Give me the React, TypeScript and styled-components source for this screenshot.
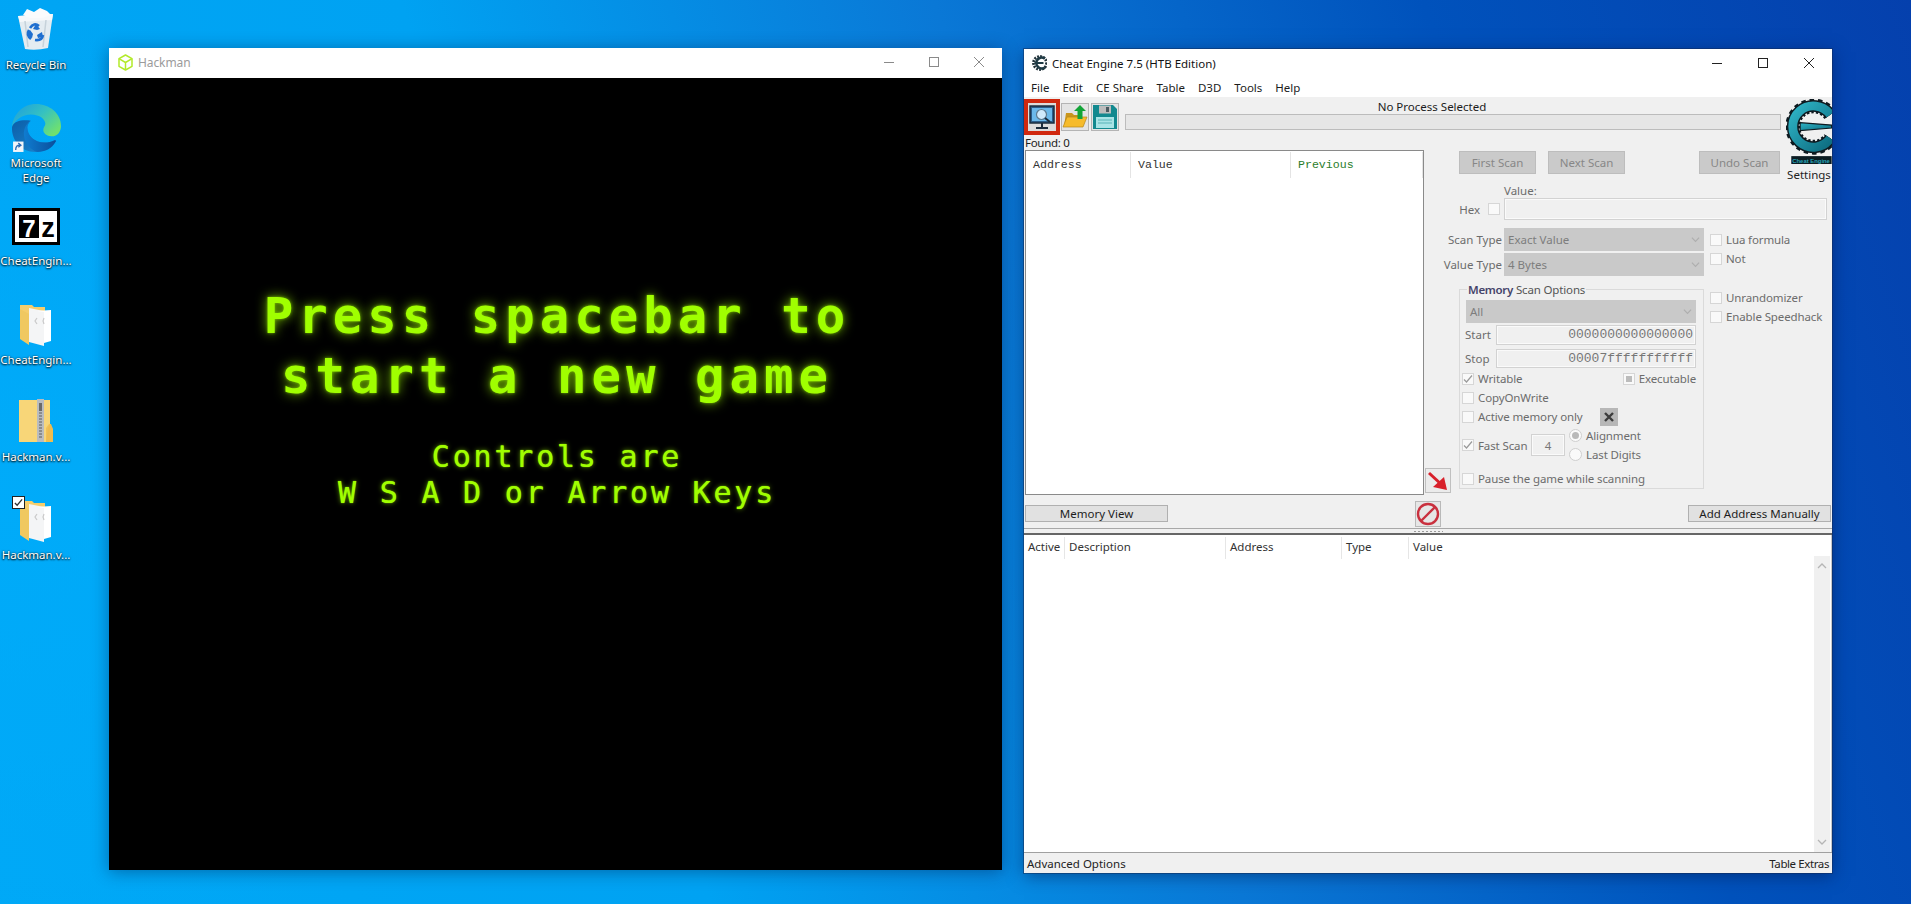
import React from "react";
import styled, { createGlobalStyle } from "styled-components";

const UI = `"Noto Sans", "Open Sans", sans-serif`;
const MONO = `"Liberation Mono", monospace`;

const Global = createGlobalStyle`
  html, body { margin: 0; padding: 0; width: 100%; height: 100%; overflow: hidden; }
  #root { width: 100%; height: 100%; }
  * { box-sizing: border-box; }
`;

const Desktop = styled.div`
  position: relative; width: 1911px; height: 904px; overflow: hidden; font-family: ${UI};
  background:
    radial-gradient(ellipse 500px 500px at 0px 500px, rgba(0,172,250,.8), rgba(0,172,250,0)),
    linear-gradient(71deg, #00a8f6 0%, #00a2f2 32%, #0a78d6 56%, #0052bc 78%, #0540ad 100%);
`;

/* ---------- desktop icons ---------- */
const IconColumn = styled.div`position: absolute; left: 0; top: 0; width: 72px; display: flex; flex-direction: column;`;
const IconCell = styled.div<{ $h: number }>`height: ${p => p.$h}px; display: flex; flex-direction: column; align-items: center;`;
const IconSlot = styled.div<{ $pb: number }>`position: relative; height: 57px; width: 72px; display: flex; align-items: flex-end; justify-content: center; padding-bottom: ${p => p.$pb}px;`;
const IconLabel = styled.div`
  font-size: 11.5px; line-height: 15px; color: #fff; text-align: center; white-space: nowrap;
  text-shadow: 0 1px 2px #000, 0 0 2px rgba(0,0,0,.7);
`;
const Tick = styled.span`
  position: absolute; left: 12px; top: 6px; width: 13px; height: 13px; background: #fff; border: 1px solid #222;
  display: flex; align-items: center; justify-content: center;
`;

const RecycleIcon = () => (
  <svg width="40" height="44" viewBox="0 0 40 44">
    <path d="M2 9 L37 7 L32 41 Q20 44 9 42 Z" fill="#e4ecf1" />
    <path d="M2 9 L37 7 L36 13 L4 15 Z" fill="#f6f8fa" />
    <path d="M7 8 L11 2 L18 5 L24 1 L31 4 L35 8 L26 11 L14 11 Z" fill="#fafbfc" />
    <path d="M9 14 L12 40 M30 13 L27 40" stroke="#c6d2da" strokeWidth="1.5" fill="none" />
    <path d="M20 17 l4 5 -3 1 -4 -1 z M26 25 l1 5 -5 1 -1 -3 z M13 30 l-2 -4 3 -3 3 4 -1 4 z" fill="#1f6fd0" />
    <path d="M14 21 q4 -6 9 -2 M27 28 q-1 6 -8 5 M15 32 q-5 -4 -2 -9" stroke="#1f6fd0" strokeWidth="2.6" fill="none" />
  </svg>
);

const EdgeIcon = () => (
  <svg width="50" height="50" viewBox="0 0 48 48">
    <defs>
      <linearGradient id="eg1" x1="0" y1="0" x2="1" y2="0.7"><stop offset="0" stopColor="#1b9de2" /><stop offset=".55" stopColor="#35c1c1" /><stop offset="1" stopColor="#6fe070" /></linearGradient>
      <linearGradient id="eg2" x1="0" y1="0" x2="1" y2="1"><stop offset="0" stopColor="#0c5ea8" /><stop offset="1" stopColor="#1a8ad4" /></linearGradient>
      <linearGradient id="eg3" x1="0" y1="0" x2="1" y2="0"><stop offset="0" stopColor="#0f7cd0" /><stop offset="1" stopColor="#0a4f9c" /></linearGradient>
    </defs>
    <path d="M24 1C11 1 2 11 1 23c3-7 10-12 18-12 9 0 14 5 14 9 0 2-2 3-2 6 0 3 3 6 8 6 6 0 9-5 9-10C48 10 37 1 24 1z" fill="url(#eg1)" />
    <path d="M1 23c-.8 13 9 24 22 24 9 0 15-3 20-10 .5-1-.3-1.6-1.2-1.2-3 1.5-6 2.2-9.5 2.2-9.500 0-17-6.500-17-14.500 0-3 1.700-5 3.700-6.500C11 16 3 17 1 23z" fill="url(#eg2)" />
    <path d="M19 17c-5 3-8 9-6 17 2 7 7 11 12 13 8 0 14-3 18-10 .5-1-.3-1.600-1.200-1.200-3 1.500-6 2.200-9.500 2.200-9.500 0-16.500-6.500-16.500-14.500 0-2.500 1.200-4.500 3.200-6.500z" fill="url(#eg3)" />
    <rect x="2" y="37" width="10" height="10" fill="#f2f5f8" />
    <path d="M4.500 45c0-3 1.500-4.500 4-4.500M7 38.500l2.500 2-2.500 2" stroke="#2b6cb8" strokeWidth="1.300" fill="none" />
  </svg>
);

const SevenZip = () => (
  <svg width="48" height="37" viewBox="0 0 48 37" style={{ display: "block" }}>
    <rect width="48" height="37" fill="#000" />
    <rect x="3" y="3" width="42" height="31" fill="#fff" />
    <rect x="7" y="7" width="20" height="23" fill="#000" />
    <text x="17" y="29" textAnchor="middle" fontFamily="Liberation Sans, sans-serif" fontWeight="700" fontSize="24" fill="#fff">7</text>
    <text x="36" y="29" textAnchor="middle" fontFamily="Liberation Sans, sans-serif" fontWeight="700" fontSize="27" fill="#000">z</text>
  </svg>
);

const PaperFolder = () => (
  <svg width="32" height="42" viewBox="0 0 32 42">
    <path d="M0 1h12l2 2h11v34H8L0 30z" fill="#f5cd6b" />
    <path d="M0 5 L9 10 V41 L0 35 Z" fill="#f0c860" />
    <path d="M9 4 L24 7 V42 L9 38 Z" fill="#f4f5f6" />
    <path d="M17 7 L31 6 V37 L24 39 V8 Z" fill="#fff" />
    <path d="M17 14 l-2 3 2 3 M24 14 l-1 3 1 3" stroke="#c9c9c9" strokeWidth="1.200" fill="none" />
  </svg>
);

const ZipFolder = () => (
  <svg width="35" height="44" viewBox="0 0 35 44">
    <rect x="0" y="1" width="31" height="42" fill="#f8d678" />
    <path d="M27 29 l3 -4 h1 v18 h-4 z" fill="#f2c257" />
    <path d="M31 25 h1 l2 5 v13 h-7 l2 -14 z" fill="#efbc50" />
    <rect x="18" y="0" width="7" height="43" fill="#b9bcbf" />
    <rect x="20" y="4" width="3" height="8" fill="#6a6a6a" />
    <path d="M20 14h3M20 17h3M20 20h3M20 23h3M20 26h3M20 29h3M20 32h3M20 35h3M20 38h3" stroke="#5c5c5c" strokeWidth="1" />
  </svg>
);

/* ---------- window controls ---------- */
const Ctl = ({ kind, color }: { kind: "min" | "max" | "close"; color: string }) => (
  <svg width="12" height="12" viewBox="0 0 12 12" fill="none" stroke={color} strokeWidth="1">
    {kind === "min" && <path d="M1 6.500h10" />}
    {kind === "max" && <rect x="1.500" y="1.500" width="9" height="9" />}
    {kind === "close" && <path d="M1 1l10 10M11 1L1 11" />}
  </svg>
);

const Controls = styled.div<{ $gap: number; $right: number; $lift?: number }>`
  margin-left: auto; display: flex; align-items: center; gap: ${p => p.$gap}px; padding-right: ${p => p.$right}px; margin-bottom: ${p => p.$lift || 0}px;
`;

/* ---------- hackman window ---------- */
const HackWindow = styled.section`
  position: absolute; left: 109px; top: 48px; width: 893px; height: 822px; display: flex; flex-direction: column;
  box-shadow: 0 2px 16px rgba(0,30,80,.45);
`;
const HackTitle = styled.header`
  height: 30px; background: #fff; display: flex; align-items: center; padding: 0 0 1px 9px; gap: 5px;
  font-size: 12px; color: #9b9b9b; letter-spacing: -.1px;
`;
const Screen = styled.main`
  flex: 1; background: #000; color: #a0ff00; font-family: "DejaVu Sans Mono", monospace;
  display: flex; flex-direction: column; align-items: center; padding: 209px 0 0 3px; text-align: center;
`;
const Headline = styled.h1`
  margin: 0; font-size: 49px; line-height: 60px; font-weight: 700; letter-spacing: 5px;
  text-shadow: 0 0 12px rgba(160,255,0,.75), 0 0 3px rgba(160,255,0,.6);
`;
const Subline = styled.p`
  margin: 32px 0 0; font-size: 30px; line-height: 36px; font-weight: 400; letter-spacing: 2.800px; white-space: pre;
  text-shadow: 0 0 5px rgba(160,255,0,.6), 0 0 1px #a0ff00;
`;

/* ---------- cheat engine window ---------- */
const CeWindow = styled.section`
  position: absolute; left: 1024px; top: 49px; width: 808px; height: 824px; display: flex; flex-direction: column;
  background: #f0f0f0; overflow: hidden; color: #1c1c1c; font-size: 11.500px;
  box-shadow: 0 0 0 1px rgba(20,40,80,.45), 0 3px 16px rgba(0,20,70,.5);
`;
const CeTitle = styled.header`
  height: 28px; flex: none; background: #fff; display: flex; align-items: center; padding-left: 7px; gap: 5px; font-size: 11.500px; color: #111;
`;
const MenuBar = styled.nav`height: 20px; flex: none; background: #fff; display: flex; align-items: center; padding: 1px 0 0 7px; gap: 13px; font-size: 11.500px;`;

const Upper = styled.div`
  height: 431px; flex: none; display: grid;
  grid-template-columns: 401px 33px 323px 51px;
  grid-template-rows: 53px 33px 314px 31px;
`;
const Toolbar = styled.div`grid-column: 1 / 4; grid-row: 1; display: flex;`;
const ToolColumn = styled.div`width: 101px; flex: none; padding-top: 2px; display: flex; flex-direction: column;`;
const ToolRow = styled.div`display: flex; height: 36px; gap: 2px;`;
const RedFrame = styled.div`
  width: 36px; height: 36px; border: 4px solid #d0280f; background: #dcdcdc; display: flex; align-items: center; justify-content: center; margin-right: -1px;
`;
const ToolButton = styled.div`
  width: 28px; height: 28px; margin-top: 4px; border: 1px solid #b4b4b4; background: #e4e4e4; display: flex; align-items: center; justify-content: center;
`;
const FoundLabel = styled.div`height: 15px; line-height: 15px; padding-left: 1px; white-space: nowrap; letter-spacing: -.3px;`;
const ProcessColumn = styled.div`flex: 1; display: flex; flex-direction: column; padding-top: 3px;`;
const ProcessName = styled.div`height: 14px; line-height: 14px; text-align: center; padding-right: 42px;`;
const ProgressBar = styled.div`height: 16px; background: #e6e6e6; border: 1px solid #bcbcbc;`;

const LogoColumn = styled.div`
  grid-column: 4; grid-row: 1 / 3; padding: 2px 0 0 5px; display: flex; flex-direction: column;
`;
const SettingsLabel = styled.div`height: 16px; margin-top: 3px; line-height: 16px; width: 46px; text-align: center; color: #222;`;

const ResultList = styled.div`
  grid-column: 1; grid-row: 2 / 4; margin: 0 1px 2px 1px; background: #fff; border: 1px solid #8a8a8a;
`;
const ResultHead = styled.div`display: grid; grid-template-columns: 105px 160px 1fr; height: 26px; padding-top: 1px; font-family: ${MONO}; font-size: 11.600px; align-items: stretch;`;
const ResultCell = styled.div<{ $green?: boolean }>`
  padding-left: 7px; line-height: 26px; border-right: 1px solid #e4e4e4; color: ${p => (p.$green ? "#2b7d2b" : "#333")};
`;
const ArrowButton = styled.div`
  grid-column: 2; grid-row: 3; align-self: end; margin-bottom: 4px; width: 26px; height: 25px; background: #ebebeb; border: 1px solid #c0c0c0;
  display: flex; align-items: center; justify-content: center;
`;
const ScanButtons = styled.div`grid-column: 3; grid-row: 2; display: flex; gap: 12px; padding: 1px 1px 0 1px; height: 24px;`;
const ScanButton = styled.div<{ $w: number; $push?: boolean }>`
  width: ${p => p.$w}px; height: 23px; line-height: 21px; text-align: center; background: #cacaca; border: 1px solid #bdbdbd; color: #878787;
  margin-left: ${p => (p.$push ? "auto" : "0")};
`;

const RightPanel = styled.div`grid-column: 3 / 5; grid-row: 3; display: flex; flex-direction: column; color: #6c6c6c;`;
const ValueLabel = styled.div`height: 15px; line-height: 15px; margin-left: 46px;`;
const HexRow = styled.div`display: grid; grid-template-columns: 46px 323px; height: 22px;`;
const HexLabel = styled.div`display: flex; align-items: center; justify-content: flex-end; gap: 8px; padding-right: 4px;`;
const Field = styled.div<{ $mono?: boolean; $right?: boolean; $center?: boolean }>`
  height: 100%; min-width: 0; background: #f0f0f0; border: 1px solid #d2d2d2; box-shadow: inset 0 0 0 1px #fafafa;
  font-family: ${p => (p.$mono ? MONO : "inherit")}; font-size: ${p => (p.$mono ? "13px" : "inherit")};
  display: flex; align-items: center; color: #777; padding-right: ${p => (p.$right ? "2px" : 0)};
  justify-content: ${p => (p.$right ? "flex-end" : p.$center ? "center" : "flex-start")};
`;
const TypeGrid = styled.div`display: grid; grid-template-columns: 46px 200px 1fr; grid-auto-rows: 23px; row-gap: 2px; margin-top: 8px;`;
const TypeLabel = styled.div`display: flex; align-items: center; justify-content: flex-end; padding-right: 2px; white-space: nowrap;`;
const Select = styled.div<{ $indent?: number }>`
  height: 23px; background: #c9c9c9; color: #7d7d7d; display: flex; align-items: center; justify-content: space-between;
  padding: 0 4px 0 4px; margin-left: ${p => p.$indent || 0}px; flex: none;
`;
const TypeChecks = styled.div`grid-column: 3; grid-row: 1 / 3; display: flex; flex-direction: column; gap: 0; padding: 2px 0 0 6px;`;
const OptionsRow = styled.div`display: flex; margin-top: 13px;`;
const OptionsBox = styled.fieldset`
  position: relative; margin: 0 0 0 1px; width: 245px; height: 200px; flex: none; border: 1px solid #dadada;
  padding: 10px 7px 0 2px; display: flex; flex-direction: column; min-width: 0;
`;
const Legend = styled.div`
  position: absolute; left: 7px; top: -8px; background: #f0f0f0; padding: 0 1px; color: #555; line-height: 15px; white-space: nowrap; letter-spacing: -.15px;
  b { color: #44446a; font-weight: 600; letter-spacing: -.3px; }
`;
const AddrRow = styled.div<{ $gap: number }>`display: grid; grid-template-columns: 31px 1fr; height: 20px; margin-top: ${p => p.$gap}px; align-items: center; padding-left: 3px;`;
const CheckRow = styled.div<{ $gap?: number }>`display: flex; align-items: center; justify-content: space-between; margin-top: ${p => p.$gap || 0}px;`;
const SideChecks = styled.div`display: flex; flex-direction: column; padding-left: 6px; margin-top: -1px;`;
const Labeled = styled.label`display: flex; align-items: center; gap: 4px; height: 19px; white-space: nowrap; letter-spacing: -.12px;`;
const Box = styled.span`
  width: 12px; height: 12px; flex: none; border: 1px solid #d6d6d6; background: #f9f9f9; display: flex; align-items: center; justify-content: center;
`;
const Dot = styled.span<{ $on?: boolean }>`
  width: 13px; height: 13px; flex: none; border-radius: 50%; border: 1px solid #cfcfcf; background: #fafafa; display: flex; align-items: center; justify-content: center;
  &::after { content: ""; width: 7px; height: 7px; border-radius: 50%; background: ${p => (p.$on ? "#b9b9b9" : "transparent")}; }
`;
const Square = styled.span`width: 6px; height: 6px; background: #bcbcbc;`;
const ClearButton = styled.div`
  width: 18px; height: 18px; margin: 0 78px 0 auto; background: #b7b7b7; display: flex; align-items: center; justify-content: center;
`;
const FastRow = styled.div`height: 38px; display: flex; align-items: center;`;
const FastLabel = styled.div`width: 69px; flex: none;`;
const FastField = styled.div`width: 34px; height: 22px; flex: none;`;
const RadioStack = styled.div`margin-left: 4px; display: flex; flex-direction: column;`;
const PauseRow = styled.div`margin-top: 5px;`;

const ActionRow = styled.div`grid-column: 1 / 5; grid-row: 4; display: flex; align-items: flex-start;`;
const GreyButton = styled.div<{ $w: number }>`
  width: ${p => p.$w}px; height: 17px; margin-top: 8px; line-height: 15px; text-align: center; background: #e1e1e1; border: 1px solid #b0b0b0; color: #1d1d1d; flex: none; white-space: nowrap;
`;
const MemoryGap = styled.div`width: 1px; flex: none;`;
const StopButton = styled.div`
  width: 26px; height: 26px; margin: 4px 0 0 247px; background: #e6e6e6; border: 1px solid #b9b9b9; display: flex; align-items: center; justify-content: center; flex: none;
`;
const AddWrap = styled.div`margin-left: auto; margin-right: 1px;`;

const Splitter = styled.div`
  height: 7px; flex: none; border-top: 1px solid #a8a8a8; border-bottom: 2px solid #666; display: flex; align-items: center; justify-content: center;
  &::after { content: ""; width: 29px; height: 1px; background: repeating-linear-gradient(90deg, #9a9a9a 0 2px, transparent 2px 4px); }
`;
const TableArea = styled.div`flex: 1; min-height: 0; background: #fff; display: flex; border-right: 1px solid #c8c8c8;`;
const TableMain = styled.div`flex: 1; min-width: 0;`;
const TableHead = styled.div`display: grid; grid-template-columns: 41px 161px 116px 67px 1fr; height: 24px; padding-top: 2px;`;
const TableCell = styled.div`padding-left: 4px; line-height: 20px; color: #333; border-right: 1px solid #e6e6e6; white-space: nowrap;`;
const TableValue = styled(TableCell)`border-right: 0;`;
const ScrollBar = styled.div`
  width: 16px; margin: 21px 1px 0 0; background: #f0f0f0; display: flex; flex-direction: column; justify-content: space-between; align-items: center; padding: 5px 0;
`;
const BottomBar = styled.footer`
  height: 21px; flex: none; border-top: 1px solid #a0a0a0; display: flex; align-items: center; justify-content: space-between; padding: 0 3px; color: #222;
`;
const TightText = styled.span`letter-spacing: -.4px;`;

/* ---------- ce drawings ---------- */
const CeSmall = () => (
  <svg width="16" height="16" viewBox="0 0 16 16" fill="none">
    <circle cx="9" cy="8" r="6.500" stroke="#22323a" strokeWidth="2.800" strokeDasharray="1.800 1.200" />
    <path d="M14 3.500 A5.500 5.500 0 1 0 14 12.500" stroke="#1f3a44" strokeWidth="2.600" />
    <path d="M3.500 8h9" stroke="#1f3a44" strokeWidth="2" />
  </svg>
);
const ARC = "M44.700 16 A21 21 0 1 0 44.700 40";
const CeLogo = () => (
  <svg width="46" height="66" viewBox="0 0 46 66" fill="none" style={{ display: "block" }}>
    <defs>
      <linearGradient id="tl" x1="0" y1="0" x2="1" y2="1"><stop offset="0" stopColor="#2fb4c6" /><stop offset="1" stopColor="#0d6c80" /></linearGradient>
    </defs>
    <path d={ARC} stroke="#0e1a20" strokeWidth="15" strokeDasharray="3.500 3" />
    <path d={ARC} stroke="#0e1a20" strokeWidth="12" />
    <path d={ARC} stroke="url(#tl)" strokeWidth="9" />
    <path d="M14 24 L46 26.500 L46 29.500 L14 32 Z" fill="url(#tl)" stroke="#0e1a20" strokeWidth="1.200" />
    <rect x="5" y="58" width="41" height="8" fill="#0b1c22" />
    <text x="6" y="64.500" fontFamily="Liberation Sans, sans-serif" fontSize="6" fontWeight="700" fill="#2aa5b8">Cheat Engine</text>
  </svg>
);
const MonitorIcon = () => (
  <svg width="26" height="25" viewBox="0 0 26 25">
    <rect x="1" y="1" width="24" height="17" fill="#2b5d8a" stroke="#1b2c3c" strokeWidth="1.500" />
    <rect x="3" y="3" width="20" height="13" fill="#6bb9ea" />
    <path d="M13 18v4M7 23h12" stroke="#1b2c3c" strokeWidth="2" />
    <circle cx="12.500" cy="9.500" r="5" fill="#cfeafb" stroke="#5d7b90" strokeWidth="1.200" />
    <path d="M16 13l5 4" stroke="#1b2c3c" strokeWidth="2" />
  </svg>
);
const OpenIcon = () => (
  <svg width="26" height="26" viewBox="0 0 26 26">
    <path d="M4 9h6l2 2h6v11H2z" fill="#c9951c" />
    <path d="M5 13h20l-4 10H1z" fill="#f6bb2b" stroke="#b6861a" strokeWidth=".7" />
    <path d="M18 1l6 6h-3.500v8h-5V7H12z" fill="#12a437" />
  </svg>
);
const SaveIcon = () => (
  <svg width="26" height="26" viewBox="0 0 26 26">
    <path d="M1 1h20l4 4v20H1z" fill="#12898f" />
    <rect x="7" y="1.500" width="12" height="8" fill="#bcbcbc" />
    <rect x="14" y="3" width="3" height="5" fill="#4a5a60" />
    <rect x="4" y="13" width="18" height="11" fill="#a8e4e6" />
    <path d="M6 16h14M6 19h14" stroke="#59b3b8" strokeWidth="1" />
  </svg>
);
const RedArrow = () => (
  <svg width="22" height="22" viewBox="0 0 22 22">
    <path d="M2 3l13 12" stroke="#d8202a" strokeWidth="3" />
    <path d="M20 20L6 17 17 7z" fill="#d8202a" />
  </svg>
);
const StopIcon = () => (
  <svg width="24" height="24" viewBox="0 0 24 24" fill="none" stroke="#c9303e" strokeWidth="2.400">
    <circle cx="12" cy="12" r="10" />
    <path d="M5 19L19 5" />
  </svg>
);
const Chevron = ({ up, dim, color = "#aeaeae" }: { up?: boolean; dim?: number; color?: string }) => (
  <svg width={dim || 9} height={dim || 9} viewBox="0 0 10 10" fill="none" stroke={color} strokeWidth="1.300">
    <path d={up ? "M1 7l4-4 4 4" : "M1 3l4 4 4-4"} />
  </svg>
);
const CheckMark = () => (
  <svg width="10" height="10" viewBox="0 0 10 10" fill="none" stroke="#9a9a9a" strokeWidth="1.200"><path d="M1 5.500l2.500 2.500L9 1.500" /></svg>
);
const Cube = () => (
  <svg width="15" height="17" viewBox="0 0 15 17" fill="none" stroke="#b3ea2a" strokeWidth="1.500" strokeLinejoin="round">
    <path d="M7.500 1L14 4.700v7.600L7.500 16 1 12.300V4.700z" />
    <path d="M1 4.700l6.500 3.800L14 4.700M7.500 8.500V16" />
  </svg>
);

const Check = ({ children, on, mixed }: { children: React.ReactNode; on?: boolean; mixed?: boolean }) => (
  <Labeled>
    <Box>{on && <CheckMark />}{mixed && <Square />}</Box>
    {children}
  </Labeled>
);

const Radio = ({ children, on }: { children: React.ReactNode; on?: boolean }) => (
  <Labeled><Dot $on={on} />{children}</Labeled>
);

const desktopItems = [
  { label: "Recycle Bin", icon: <RecycleIcon />, pb: 6 },
  { label: "Microsoft\nEdge", icon: <EdgeIcon />, pb: 2 },
  { label: "CheatEngin...", icon: <SevenZip />, pb: 8 },
  { label: "CheatEngin...", icon: <PaperFolder />, pb: 6, h: 97 },
  { label: "Hackman.v...", icon: <ZipFolder />, pb: 6, h: 98 },
  { label: "Hackman.v...", icon: <PaperFolder />, pb: 5, tick: true },
];

export default function App() {
  return (
    <Desktop>
      <Global />
      <IconColumn>
        {desktopItems.map((it, i) => (
          <IconCell key={i} $h={i === 2 ? 99 : it.h || 98}>
            <IconSlot $pb={it.pb}>
              {it.tick && <Tick><svg width="9" height="9" viewBox="0 0 10 10" fill="none" stroke="#333" strokeWidth="1.500"><path d="M1 5.500l2.500 2.500L9 1.500" /></svg></Tick>}
              {it.icon}
            </IconSlot>
            {it.label.split("\n").map(l => <IconLabel key={l}>{l}</IconLabel>)}
          </IconCell>
        ))}
      </IconColumn>

      <HackWindow>
        <HackTitle>
          <Cube />
          <span>Hackman</span>
          <Controls $gap={33} $right={17} $lift={1}>
            <Ctl kind="min" color="#8a8a8a" />
            <Ctl kind="max" color="#8a8a8a" />
            <Ctl kind="close" color="#8a8a8a" />
          </Controls>
        </HackTitle>
        <Screen>
          <Headline>Press spacebar to<br />start a new game</Headline>
          <Subline>Controls are{"\n"}W S A D or Arrow Keys</Subline>
        </Screen>
      </HackWindow>

      <CeWindow>
        <CeTitle>
          <CeSmall />
          <span>Cheat Engine 7.5 (HTB Edition)</span>
          <Controls $gap={34} $right={17}>
            <Ctl kind="min" color="#222" />
            <Ctl kind="max" color="#222" />
            <Ctl kind="close" color="#222" />
          </Controls>
        </CeTitle>
        <MenuBar>
          {["File", "Edit", "CE Share", "Table", "D3D", "Tools", "Help"].map(m => <span key={m}>{m}</span>)}
        </MenuBar>
        <Upper>
          <Toolbar>
            <ToolColumn>
              <ToolRow>
                <RedFrame><MonitorIcon /></RedFrame>
                <ToolButton><OpenIcon /></ToolButton>
                <ToolButton><SaveIcon /></ToolButton>
              </ToolRow>
              <FoundLabel>Found: 0</FoundLabel>
            </ToolColumn>
            <ProcessColumn>
              <ProcessName>No Process Selected</ProcessName>
              <ProgressBar />
            </ProcessColumn>
          </Toolbar>
          <LogoColumn>
            <CeLogo />
            <SettingsLabel>Settings</SettingsLabel>
          </LogoColumn>
          <ResultList>
            <ResultHead>
              <ResultCell>Address</ResultCell>
              <ResultCell>Value</ResultCell>
              <ResultCell $green>Previous</ResultCell>
            </ResultHead>
          </ResultList>
          <ScanButtons>
            <ScanButton $w={77}>First Scan</ScanButton>
            <ScanButton $w={77}>Next Scan</ScanButton>
            <ScanButton $w={81} $push>Undo Scan</ScanButton>
          </ScanButtons>
          <ArrowButton><RedArrow /></ArrowButton>
          <RightPanel>
            <ValueLabel>Value:</ValueLabel>
            <HexRow>
              <HexLabel><span>Hex</span><Box /></HexLabel>
              <Field />
            </HexRow>
            <TypeGrid>
              <TypeLabel>Scan Type</TypeLabel>
              <Select>Exact Value<Chevron /></Select>
              <TypeChecks>
                <Check>Lua formula</Check>
                <Check>Not</Check>
              </TypeChecks>
              <TypeLabel>Value Type</TypeLabel>
              <Select>4 Bytes<Chevron /></Select>
            </TypeGrid>
            <OptionsRow>
              <OptionsBox>
                <Legend><b>Memory</b> Scan Options</Legend>
                <Select $indent={4}>All<Chevron /></Select>
                <AddrRow $gap={2}>
                  <span>Start</span>
                  <Field $mono $right>0000000000000000</Field>
                </AddrRow>
                <AddrRow $gap={4}>
                  <span>Stop</span>
                  <Field $mono $right>00007fffffffffff</Field>
                </AddrRow>
                <CheckRow $gap={1}>
                  <Check on>Writable</Check>
                  <Check mixed>Executable</Check>
                </CheckRow>
                <CheckRow><Check>CopyOnWrite</Check></CheckRow>
                <CheckRow>
                  <Check>Active memory only</Check>
                  <ClearButton>
                    <svg width="12" height="12" viewBox="0 0 12 12" stroke="#3c3c3c" strokeWidth="2.400"><path d="M2 2l8 8M10 2l-8 8" /></svg>
                  </ClearButton>
                </CheckRow>
                <FastRow>
                  <FastLabel><Check on>Fast Scan</Check></FastLabel>
                  <FastField><Field $center>4</Field></FastField>
                  <RadioStack>
                    <Radio on>Alignment</Radio>
                    <Radio>Last Digits</Radio>
                  </RadioStack>
                </FastRow>
                <PauseRow><Check>Pause the game while scanning</Check></PauseRow>
              </OptionsBox>
              <SideChecks>
                <Check>Unrandomizer</Check>
                <Check>Enable Speedhack</Check>
              </SideChecks>
            </OptionsRow>
          </RightPanel>
          <ActionRow>
            <MemoryGap />
            <GreyButton $w={143}>Memory View</GreyButton>
            <StopButton><StopIcon /></StopButton>
            <AddWrap><GreyButton $w={143}>Add Address Manually</GreyButton></AddWrap>
          </ActionRow>
        </Upper>
        <Splitter />
        <TableArea>
          <TableMain>
            <TableHead>
              <TableCell>Active</TableCell>
              <TableCell>Description</TableCell>
              <TableCell>Address</TableCell>
              <TableCell>Type</TableCell>
              <TableValue>Value</TableValue>
            </TableHead>
          </TableMain>
          <ScrollBar>
            <Chevron up dim={10} color="#b5b5b5" />
            <Chevron dim={10} color="#b5b5b5" />
          </ScrollBar>
        </TableArea>
        <BottomBar>
          <span>Advanced Options</span>
          <TightText>Table Extras</TightText>
        </BottomBar>
      </CeWindow>
    </Desktop>
  );
}
